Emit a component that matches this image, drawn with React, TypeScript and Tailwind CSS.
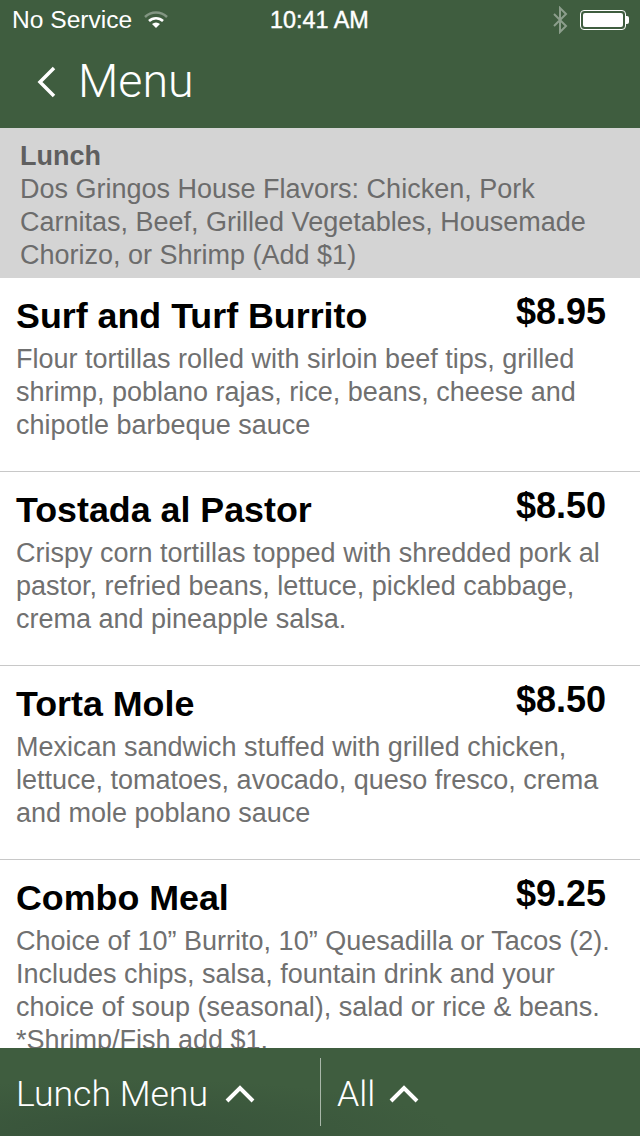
const items = [
  {
    name: "Surf and Turf Burrito",
    price: "$8.95",
    lines: ["Flour tortillas rolled with sirloin beef tips, grilled", "shrimp, poblano rajas, rice, beans, cheese and", "chipotle barbeque sauce"],
  },
  {
    name: "Tostada al Pastor",
    price: "$8.50",
    lines: ["Crispy corn tortillas topped with shredded pork al", "pastor, refried beans, lettuce, pickled cabbage,", "crema and pineapple salsa."],
  },
  {
    name: "Torta Mole",
    price: "$8.50",
    lines: ["Mexican sandwich stuffed with grilled chicken,", "lettuce, tomatoes, avocado, queso fresco, crema", "and mole poblano sauce"],
  },
  {
    name: "Combo Meal",
    price: "$9.25",
    lines: ["Choice of 10” Burrito, 10” Quesadilla or Tacos (2).", "Includes chips, salsa, fountain drink and your", "choice of soup (seasonal), salad or rice & beans.", "*Shrimp/Fish add $1."],
  },
];

const Chevron = () => (
  <svg width="30" height="20" viewBox="0 0 30 20">
    <path d="M2 17 L15 4 L28 17" fill="none" stroke="#ffffff" strokeWidth="4" />
  </svg>
);

const StatusBar = () => (
  <div className="h-10 flex items-center justify-between pl-3 pr-[11px] text-white text-[24.6px] relative">
    <div className="flex items-center gap-[12px]">
      <span>No Service</span>
      <svg width="24" height="17" viewBox="0 0 24 17">
        <path d="M1 6 A16 16 0 0 1 23 6" fill="none" stroke="#ffffff" strokeOpacity="0.35" strokeWidth="2.5" />
        <path d="M5 10 A10 10 0 0 1 19 10" fill="none" stroke="#ffffff" strokeWidth="2.5" />
        <path d="M8 13 L12 17 L16 13 A6 6 0 0 0 8 13 Z" fill="#ffffff" />
      </svg>
    </div>
    <span className="absolute left-[270px] top-[5px] text-[23.4px] leading-[30px] [-webkit-text-stroke:0.4px_white]">10:41 AM</span>
    <div className="flex items-center gap-[12px]">
      <svg width="16" height="28" viewBox="0 0 16 28" className="opacity-40">
        <path d="M2 8 L14 20 L8 26 L8 2 L14 8 L2 20" fill="none" stroke="#ffffff" strokeWidth="2" />
      </svg>
      <div className="flex items-center">
        <div className="w-[46px] h-[20px] border border-white rounded-[4px] p-[2px]">
          <div className="w-full h-full bg-white rounded-[2px]" />
        </div>
        <div className="w-[3px] h-[8px] bg-white rounded-r-[2px]" />
      </div>
    </div>
  </div>
);

export default function App() {
  return (
    <div className="w-[640px] h-[1136px] flex flex-col bg-white overflow-hidden font-['Liberation_Sans',sans-serif]">
      <div className="h-[128px] shrink-0 bg-[#3f5d3f]">
        <StatusBar />
        <div className="flex items-center h-[84px] pl-[36px] gap-[20px] text-white">
          <svg width="22" height="32" viewBox="0 0 22 32">
            <path d="M18 2 L4 16 L18 30" fill="none" stroke="#ffffff" strokeWidth="3.5" />
          </svg>
          <span className="text-[46.6px] font-['Roboto',sans-serif] font-light">Menu</span>
        </div>
      </div>

      <div className="h-[150px] shrink-0 bg-[#d4d4d4] px-5 pt-[12px] text-[#6c6c6c] text-[27px] leading-[33px]">
        <div className="font-bold text-[#5f5f5f]">Lunch</div>
        <div>Dos Gringos House Flavors: Chicken, Pork</div>
        <div>Carnitas, Beef, Grilled Vegetables, Housemade</div>
        <div>Chorizo, or Shrimp (Add $1)</div>
      </div>

      <div className="flex-1 min-h-0 overflow-hidden">
        {items.map((item) => (
          <div key={item.name} className="h-[194px] border-b border-[#c8c8c8] px-4">
            <div className="flex justify-between pr-[18px] h-[65px]">
              <span className="text-[35.8px] font-bold text-black pt-[16px] leading-[44px]">{item.name}</span>
              <span className="text-[36px] font-bold text-black pt-[12px] leading-[44px]">{item.price}</span>
            </div>
            <div className="text-[27px] leading-[33px] text-[#707070]">
              {item.lines.map((line) => (
                <div key={line} className="whitespace-nowrap">{line}</div>
              ))}
            </div>
          </div>
        ))}
      </div>

      <div className="h-[88px] shrink-0 bg-[radial-gradient(ellipse_at_130px_85px,#37523a_0%,#3f5d3f_45%)] flex items-center text-white">
        <div className="w-[320px] flex items-center pl-4 pt-[4px] gap-[17px]">
          <span className="text-[35.6px] leading-[44px] font-['Roboto',sans-serif] font-light">Lunch Menu</span>
          <Chevron />
        </div>
        <div className="h-[68px] w-px bg-[#a9b7a9]" />
        <div className="flex items-center pl-4 pt-[4px] gap-[14px]">
          <span className="text-[35.6px] leading-[44px] font-['Roboto',sans-serif] font-light">All</span>
          <Chevron />
        </div>
      </div>
    </div>
  );
}
